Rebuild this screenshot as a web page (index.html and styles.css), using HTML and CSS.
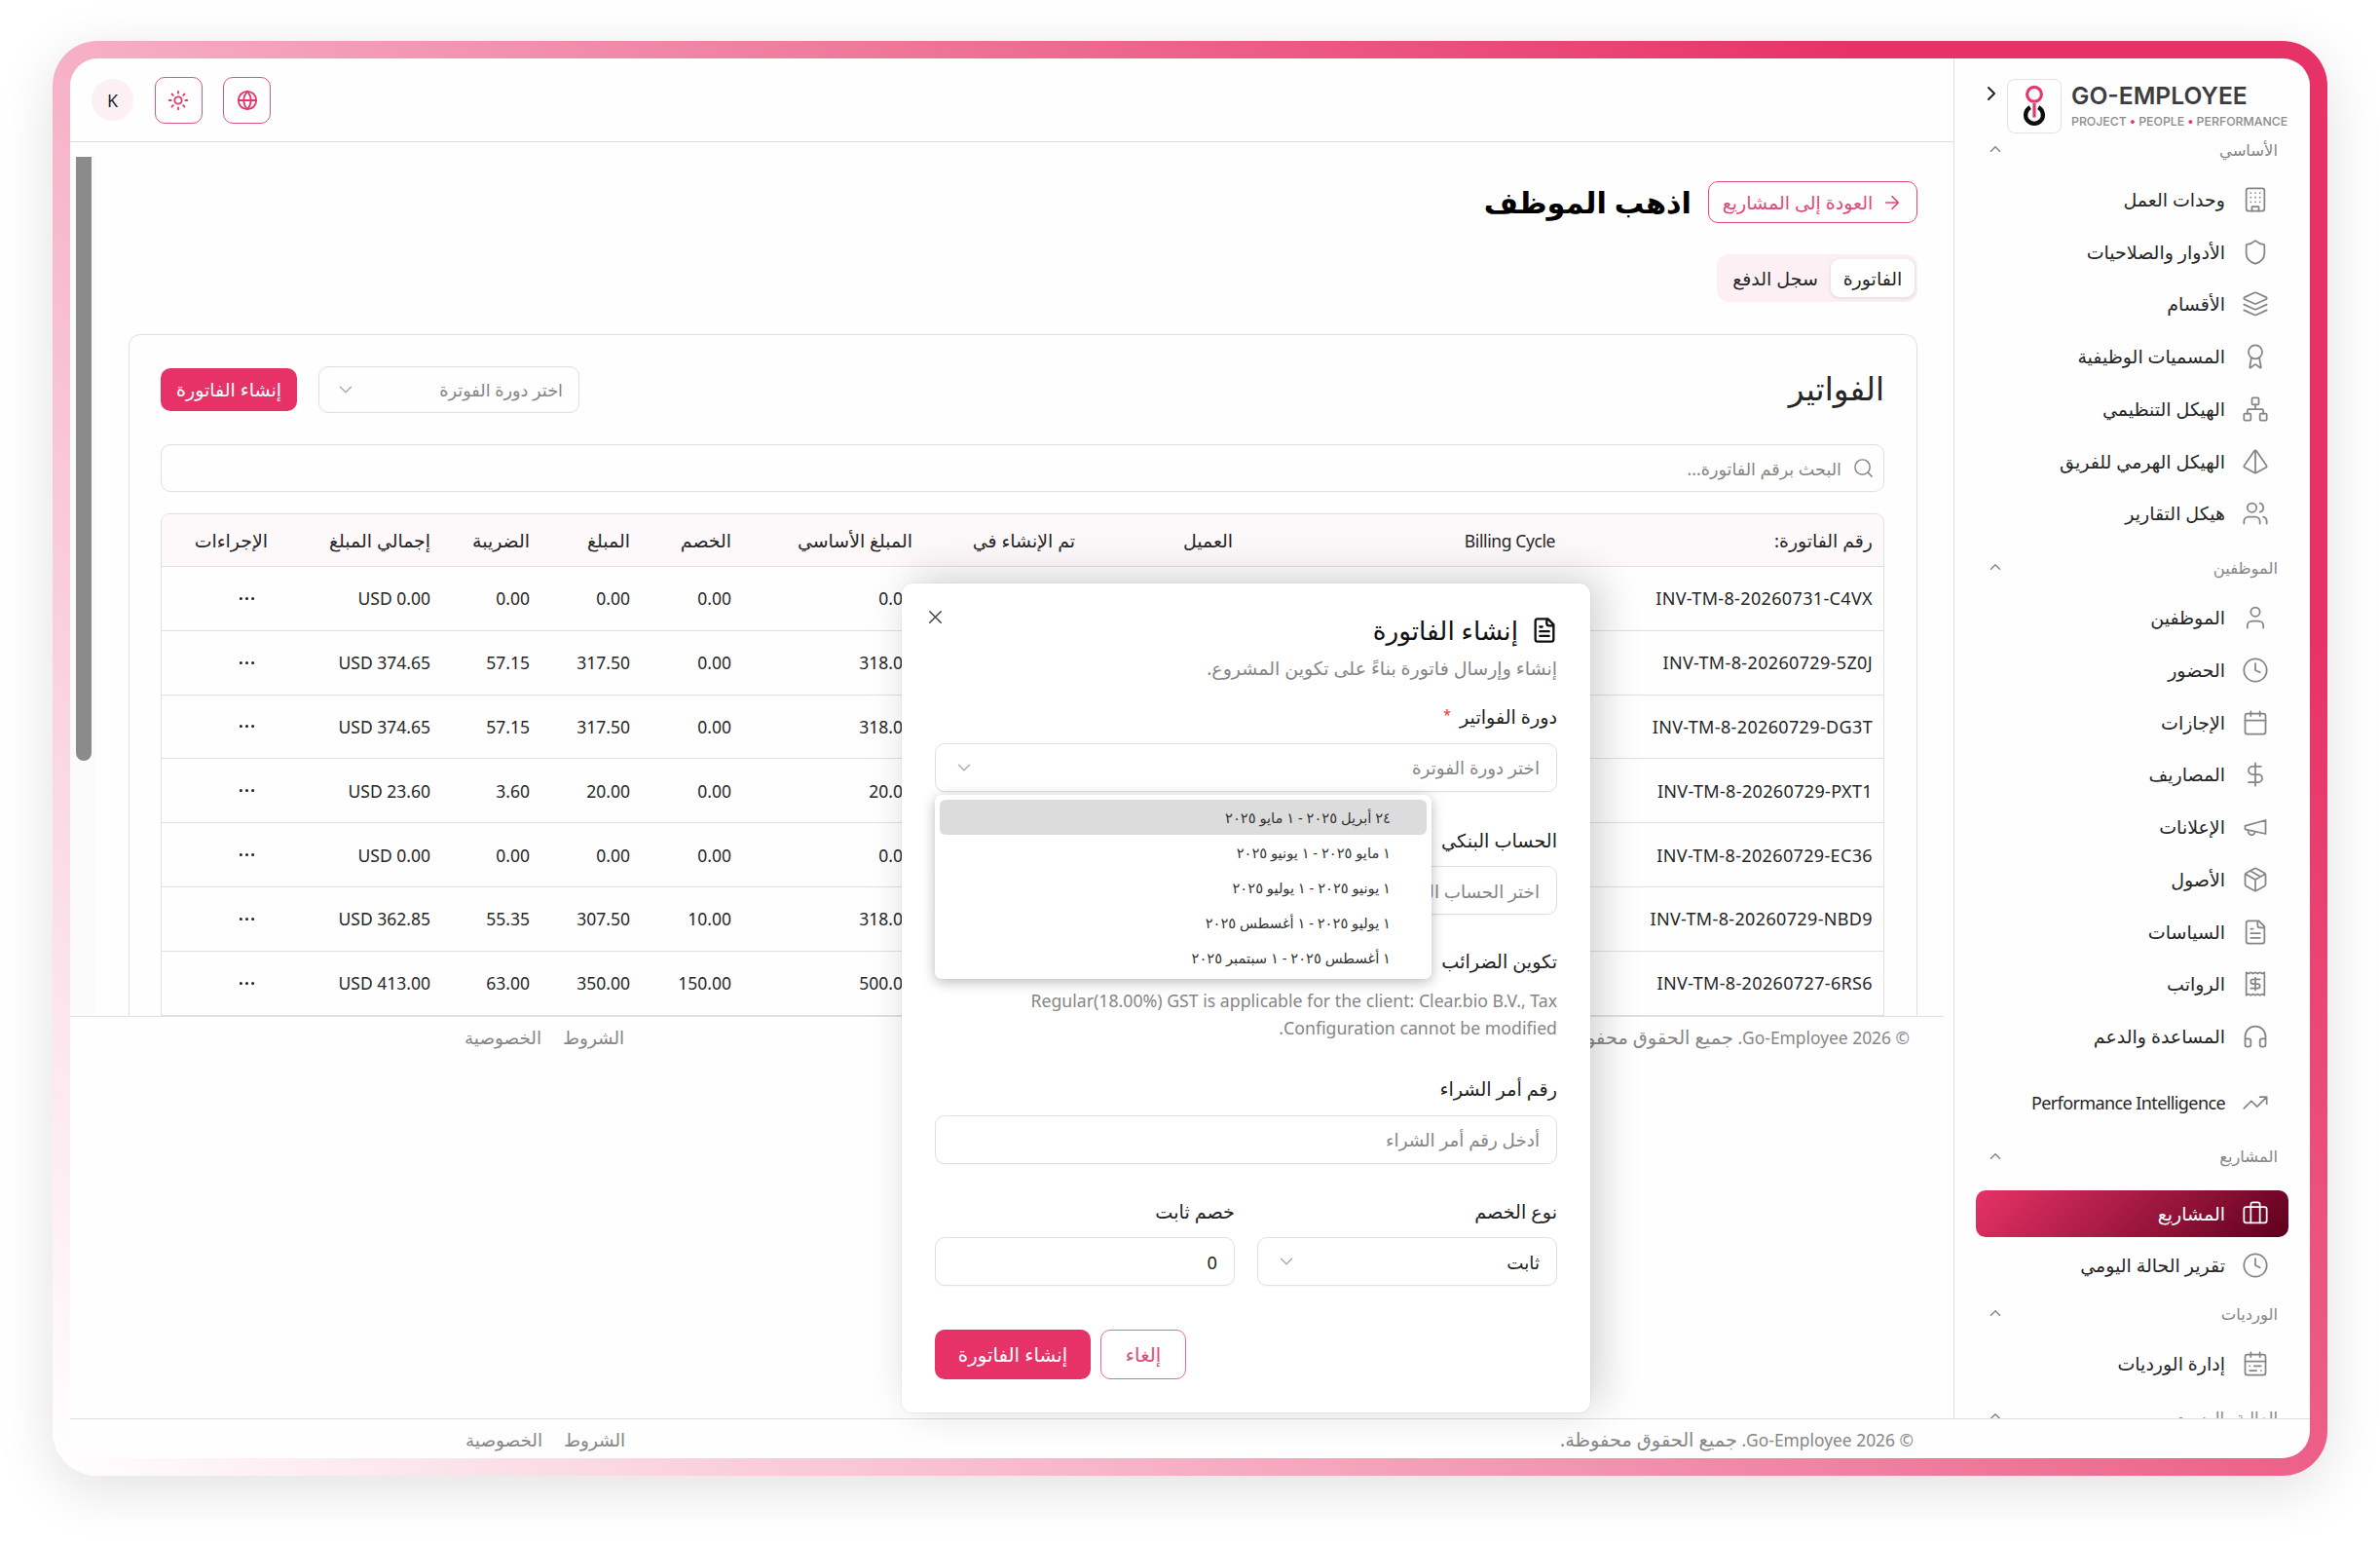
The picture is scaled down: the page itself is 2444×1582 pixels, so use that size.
FILE: index.html
```html
<!DOCTYPE html>
<html lang="ar" dir="rtl">
<head>
<meta charset="utf-8">
<title>Go-Employee</title>
<link rel="stylesheet" href="styles.css">
</head>
<body>
<svg class="sprite" aria-hidden="true">
  <symbol id="i-building" viewBox="0 0 24 24"><rect x="4" y="2" width="16" height="20" rx="2"/><path d="M9 22v-4h6v4M8 6h.01M16 6h.01M12 6h.01M12 10h.01M12 14h.01M16 10h.01M16 14h.01M8 10h.01M8 14h.01"/></symbol>
  <symbol id="i-shield" viewBox="0 0 24 24"><path d="M20 13c0 5-3.5 7.5-7.66 8.95a1 1 0 0 1-.67-.01C7.5 20.5 4 18 4 13V6a1 1 0 0 1 1-1c2 0 4.5-1.2 6.24-2.72a1.17 1.17 0 0 1 1.52 0C14.51 3.81 17 5 19 5a1 1 0 0 1 1 1z"/></symbol>
  <symbol id="i-layers" viewBox="0 0 24 24"><path d="m12.83 2.18a2 2 0 0 0-1.66 0L2.6 6.08a1 1 0 0 0 0 1.83l8.58 3.91a2 2 0 0 0 1.66 0l8.58-3.9a1 1 0 0 0 0-1.83Z"/><path d="m22 12.5-9.17 4.16a2 2 0 0 1-1.66 0L2 12.5"/><path d="m22 17.5-9.17 4.16a2 2 0 0 1-1.66 0L2 17.5"/></symbol>
  <symbol id="i-award" viewBox="0 0 24 24"><circle cx="12" cy="8" r="6"/><path d="m15.477 12.89 1.515 8.526a.5.5 0 0 1-.81.47l-3.58-2.687a1 1 0 0 0-1.197 0l-3.586 2.686a.5.5 0 0 1-.81-.469l1.514-8.526"/></symbol>
  <symbol id="i-network" viewBox="0 0 24 24"><rect x="16" y="16" width="6" height="6" rx="1"/><rect x="2" y="16" width="6" height="6" rx="1"/><rect x="9" y="2" width="6" height="6" rx="1"/><path d="M5 16v-3a1 1 0 0 1 1-1h12a1 1 0 0 1 1 1v3M12 12V8"/></symbol>
  <symbol id="i-pyramid" viewBox="0 0 24 24"><path d="M2.5 16.88a1 1 0 0 1-.32-1.43l9-13.02a1 1 0 0 1 1.64 0l9 13.01a1 1 0 0 1-.32 1.44l-8.51 4.86a2 2 0 0 1-1.98 0ZM12 2v20"/></symbol>
  <symbol id="i-users" viewBox="0 0 24 24"><path d="M16 21v-2a4 4 0 0 0-4-4H6a4 4 0 0 0-4 4v2"/><circle cx="9" cy="7" r="4"/><path d="M22 21v-2a4 4 0 0 0-3-3.87M16 3.13a4 4 0 0 1 0 7.75"/></symbol>
  <symbol id="i-user" viewBox="0 0 24 24"><path d="M19 21v-2a4 4 0 0 0-4-4H9a4 4 0 0 0-4 4v2"/><circle cx="12" cy="7" r="4"/></symbol>
  <symbol id="i-clock" viewBox="0 0 24 24"><circle cx="12" cy="12" r="10"/><path d="M12 6v6l4 2"/></symbol>
  <symbol id="i-calendar" viewBox="0 0 24 24"><rect x="3" y="4" width="18" height="18" rx="2"/><path d="M8 2v4M16 2v4M3 10h18"/></symbol>
  <symbol id="i-dollar" viewBox="0 0 24 24"><path d="M12 2v20M17 5H9.5a3.5 3.5 0 0 0 0 7h5a3.5 3.5 0 0 1 0 7H6"/></symbol>
  <symbol id="i-megaphone" viewBox="0 0 24 24"><path d="m3 11 18-5v12L3 14v-3zM11.6 16.8a3 3 0 1 1-5.8-1.6"/></symbol>
  <symbol id="i-package" viewBox="0 0 24 24"><path d="M11 21.73a2 2 0 0 0 2 0l7-4A2 2 0 0 0 21 16V8a2 2 0 0 0-1-1.73l-7-4a2 2 0 0 0-2 0l-7 4A2 2 0 0 0 3 8v8a2 2 0 0 0 1 1.73zM12 22V12M3.3 7l8.7 5 8.7-5M7.5 4.27l9 5.15"/></symbol>
  <symbol id="i-file" viewBox="0 0 24 24"><path d="M15 2H6a2 2 0 0 0-2 2v16a2 2 0 0 0 2 2h12a2 2 0 0 0 2-2V7ZM14 2v4a2 2 0 0 0 2 2h4M10 9H8M16 13H8M16 17H8"/></symbol>
  <symbol id="i-receipt" viewBox="0 0 24 24"><path d="M4 2v20l2-1 2 1 2-1 2 1 2-1 2 1 2-1 2 1V2l-2 1-2-1-2 1-2-1-2 1-2-1-2 1ZM16 8h-6a2 2 0 1 0 0 4h4a2 2 0 1 1 0 4H8M12 17.5v-11"/></symbol>
  <symbol id="i-headphones" viewBox="0 0 24 24"><path d="M3 14h3a2 2 0 0 1 2 2v3a2 2 0 0 1-2 2H5a2 2 0 0 1-2-2v-7a9 9 0 0 1 18 0v7a2 2 0 0 1-2 2h-1a2 2 0 0 1-2-2v-3a2 2 0 0 1 2-2h3"/></symbol>
  <symbol id="i-trend" viewBox="0 0 24 24"><path d="m22 7-8.5 8.5-5-5L2 17M16 7h6v6"/></symbol>
  <symbol id="i-briefcase" viewBox="0 0 24 24"><path d="M16 20V4a2 2 0 0 0-2-2h-4a2 2 0 0 0-2 2v16"/><rect x="2" y="6" width="20" height="14" rx="2"/></symbol>
  <symbol id="i-range" viewBox="0 0 24 24"><rect x="3" y="4" width="18" height="18" rx="2"/><path d="M16 2v4M3 10h18M8 2v4M17 14h-6M13 18H7M7 14h.01M17 18h.01"/></symbol>
  <symbol id="i-up" viewBox="0 0 24 24"><path d="m18 15-6-6-6 6"/></symbol>
  <symbol id="i-down" viewBox="0 0 24 24"><path d="m6 9 6 6 6-6"/></symbol>
  <symbol id="i-right" viewBox="0 0 24 24"><path d="m9 18 6-6-6-6"/></symbol>
  <symbol id="i-arrow" viewBox="0 0 24 24"><path d="M5 12h14M12 5l7 7-7 7"/></symbol>
  <symbol id="i-search" viewBox="0 0 24 24"><circle cx="11" cy="11" r="8"/><path d="m21 21-4.3-4.3"/></symbol>
  <symbol id="i-globe" viewBox="0 0 24 24"><circle cx="12" cy="12" r="10"/><path d="M12 2a14.5 14.5 0 0 0 0 20 14.5 14.5 0 0 0 0-20M2 12h20"/></symbol>
  <symbol id="i-sun" viewBox="0 0 24 24"><circle cx="12" cy="12" r="4"/><path d="M12 2v2M12 20v2M4.93 4.93l1.41 1.41M17.66 17.66l1.41 1.41M2 12h2M20 12h2M6.34 17.66l-1.41 1.41M19.07 4.93l-1.41 1.41"/></symbol>
  <symbol id="i-x" viewBox="0 0 24 24"><path d="M18 6 6 18M6 6l12 12"/></symbol>
  <symbol id="i-dots" viewBox="0 0 24 24"><circle cx="12" cy="12" r="1"/><circle cx="19" cy="12" r="1"/><circle cx="5" cy="12" r="1"/></symbol>
</svg>

<div class="frame">
  <div class="app">
    <div class="shell">
      <aside class="sidebar">
        <div class="brand">
          <div class="brand-text" dir="ltr">
            <div class="brand-name">GO-EMPLOYEE</div>
            <div class="brand-tag">PROJECT <b>•</b> PEOPLE <b>•</b> PERFORMANCE</div>
          </div>
          <div class="brand-mark">
            <svg viewBox="0 0 56 56" width="56" height="56"><circle cx="28" cy="15.8" r="7.4" fill="none" stroke="#e13a6d" stroke-width="3.2"/><path d="M23.8 29.2a8.9 8.9 0 1 0 8.4 0" fill="none" stroke="#0c0c0c" stroke-width="4.3"/><path d="M28 25v14.5" stroke="#e13a6d" stroke-width="3.2"/></svg>
          </div>
          <svg class="icon collapse"><use href="#i-right"/></svg>
        </div>
        <nav class="nav">
          <div class="group first"><span>الأساسي</span><svg class="icon"><use href="#i-up"/></svg></div>
          <a class="item"><svg class="icon"><use href="#i-building"/></svg><span>وحدات العمل</span></a>
          <a class="item"><svg class="icon"><use href="#i-shield"/></svg><span>الأدوار والصلاحيات</span></a>
          <a class="item"><svg class="icon"><use href="#i-layers"/></svg><span>الأقسام</span></a>
          <a class="item"><svg class="icon"><use href="#i-award"/></svg><span>المسميات الوظيفية</span></a>
          <a class="item"><svg class="icon"><use href="#i-network"/></svg><span>الهيكل التنظيمي</span></a>
          <a class="item"><svg class="icon"><use href="#i-pyramid"/></svg><span>الهيكل الهرمي للفريق</span></a>
          <a class="item"><svg class="icon"><use href="#i-users"/></svg><span>هيكل التقارير</span></a>
          <div class="group"><span>الموظفين</span><svg class="icon"><use href="#i-up"/></svg></div>
          <a class="item"><svg class="icon"><use href="#i-user"/></svg><span>الموظفين</span></a>
          <a class="item"><svg class="icon"><use href="#i-clock"/></svg><span>الحضور</span></a>
          <a class="item"><svg class="icon"><use href="#i-calendar"/></svg><span>الإجازات</span></a>
          <a class="item"><svg class="icon"><use href="#i-dollar"/></svg><span>المصاريف</span></a>
          <a class="item"><svg class="icon"><use href="#i-megaphone"/></svg><span>الإعلانات</span></a>
          <a class="item"><svg class="icon"><use href="#i-package"/></svg><span>الأصول</span></a>
          <a class="item"><svg class="icon"><use href="#i-file"/></svg><span>السياسات</span></a>
          <a class="item"><svg class="icon"><use href="#i-receipt"/></svg><span>الرواتب</span></a>
          <a class="item"><svg class="icon"><use href="#i-headphones"/></svg><span>المساعدة والدعم</span></a>
          <a class="item spaced"><svg class="icon"><use href="#i-trend"/></svg><span>Performance Intelligence</span></a>
          <div class="group"><span>المشاريع</span><svg class="icon"><use href="#i-up"/></svg></div>
          <a class="item active"><svg class="icon"><use href="#i-briefcase"/></svg><span>المشاريع</span></a>
          <a class="item"><svg class="icon"><use href="#i-clock"/></svg><span>تقرير الحالة اليومي</span></a>
          <div class="group tight"><span>الورديات</span><svg class="icon"><use href="#i-up"/></svg></div>
          <a class="item"><svg class="icon"><use href="#i-range"/></svg><span>إدارة الورديات</span></a>
          <div class="group last"><span>المالية والرسوم</span><svg class="icon"><use href="#i-up"/></svg></div>
        </nav>
      </aside>

      <main class="main">
        <header class="topbar">
          <button class="square"><svg class="icon"><use href="#i-globe"/></svg></button>
          <button class="square"><svg class="icon"><use href="#i-sun"/></svg></button>
          <div class="avatar">K</div>
        </header>
        <section class="content">
          <div class="scrollbar"><div class="thumb"></div></div>
          <div class="title-row">
            <button class="back"><svg class="icon"><use href="#i-arrow"/></svg><span>العودة إلى المشاريع</span></button>
            <h1>اذهب الموظف</h1>
          </div>
          <div class="tabs"><span class="tab on">الفاتورة</span><span class="tab">سجل الدفع</span></div>
          <div class="card">
            <div class="card-head">
              <h2>الفواتير</h2>
              <div class="card-actions">
                <div class="select"><span>اختر دورة الفوترة</span><svg class="icon"><use href="#i-down"/></svg></div>
                <button class="primary">إنشاء الفاتورة</button>
              </div>
            </div>
            <div class="search"><svg class="icon"><use href="#i-search"/></svg><span>البحث برقم الفاتورة...</span></div>
            <div class="table">
              <div class="tr th"><span>رقم الفاتورة:</span><span class="latin">Billing Cycle</span><span>العميل</span><span>تم الإنشاء في</span><span>المبلغ الأساسي</span><span>الخصم</span><span>المبلغ</span><span>الضريبة</span><span>إجمالي المبلغ</span><span>الإجراءات</span></div>
              <div class="tr"><span>INV-TM-8-20260731-C4VX</span><span></span><span></span><span></span><span>0.00</span><span>0.00</span><span>0.00</span><span>0.00</span><span>USD 0.00</span><span><svg class="icon"><use href="#i-dots"/></svg></span></div>
              <div class="tr"><span>INV-TM-8-20260729-5Z0J</span><span></span><span></span><span></span><span>318.00</span><span>0.00</span><span>317.50</span><span>57.15</span><span>USD 374.65</span><span><svg class="icon"><use href="#i-dots"/></svg></span></div>
              <div class="tr"><span>INV-TM-8-20260729-DG3T</span><span></span><span></span><span></span><span>318.00</span><span>0.00</span><span>317.50</span><span>57.15</span><span>USD 374.65</span><span><svg class="icon"><use href="#i-dots"/></svg></span></div>
              <div class="tr"><span>INV-TM-8-20260729-PXT1</span><span></span><span></span><span></span><span>20.00</span><span>0.00</span><span>20.00</span><span>3.60</span><span>USD 23.60</span><span><svg class="icon"><use href="#i-dots"/></svg></span></div>
              <div class="tr"><span>INV-TM-8-20260729-EC36</span><span></span><span></span><span></span><span>0.00</span><span>0.00</span><span>0.00</span><span>0.00</span><span>USD 0.00</span><span><svg class="icon"><use href="#i-dots"/></svg></span></div>
              <div class="tr"><span>INV-TM-8-20260729-NBD9</span><span></span><span></span><span></span><span>318.00</span><span>10.00</span><span>307.50</span><span>55.35</span><span>USD 362.85</span><span><svg class="icon"><use href="#i-dots"/></svg></span></div>
              <div class="tr"><span>INV-TM-8-20260727-6RS6</span><span></span><span></span><span></span><span>500.00</span><span>150.00</span><span>350.00</span><span>63.00</span><span>USD 413.00</span><span><svg class="icon"><use href="#i-dots"/></svg></span></div>
            </div>
          </div>
        </section>
        <footer class="foot inner"><span>© 2026 Go-Employee. <em>جميع الحقوق محفوظة.</em></span><span class="links"><a>الشروط</a><a>الخصوصية</a></span></footer>
      </main>
    </div>
    <footer class="foot outer"><span>© 2026 Go-Employee. <em>جميع الحقوق محفوظة.</em></span><span class="links"><a>الشروط</a><a>الخصوصية</a></span></footer>
  </div>
</div>

<div class="modal">
  <svg class="icon close"><use href="#i-x"/></svg>
  <div class="modal-title"><svg class="icon"><use href="#i-file"/></svg><h3>إنشاء الفاتورة</h3></div>
  <p class="modal-sub">إنشاء وإرسال فاتورة بناءً على تكوين المشروع.</p>
  <label class="l1">دورة الفواتير <i>*</i></label>
  <div class="field select"><span>اختر دورة الفوترة</span><svg class="icon"><use href="#i-down"/></svg>
    <ul class="menu">
      <li class="hover">٢٤ أبريل ٢٠٢٥ - ١ مايو ٢٠٢٥</li>
      <li>١ مايو ٢٠٢٥ - ١ يونيو ٢٠٢٥</li>
      <li>١ يونيو ٢٠٢٥ - ١ يوليو ٢٠٢٥</li>
      <li>١ يوليو ٢٠٢٥ - ١ أغسطس ٢٠٢٥</li>
      <li>١ أغسطس ٢٠٢٥ - ١ سبتمبر ٢٠٢٥</li>
    </ul>
  </div>
  <label class="l2">الحساب البنكي</label>
  <div class="field select"><span>اختر الحساب البنكي</span></div>
  <label class="l3">تكوين الضرائب</label>
  <p class="note">Regular(18.00%) GST is applicable for the client: Clear.bio B.V., Tax Configuration cannot be modified.</p>
  <label class="l4">رقم أمر الشراء</label>
  <div class="field">أدخل رقم أمر الشراء</div>
  <div class="pair">
    <div><label>نوع الخصم</label><div class="field select dark"><span>ثابت</span><svg class="icon"><use href="#i-down"/></svg></div></div>
    <div><label>خصم ثابت</label><div class="field dark">0</div></div>
  </div>
  <div class="modal-actions"><button class="cancel">إلغاء</button><button class="primary">إنشاء الفاتورة</button></div>
</div>
</body>
</html>
```

FILE: styles.css
```css
* { box-sizing: border-box; margin: 0; padding: 0; }
:root { --pink: #e73267; --line: #e0e0e0; --text: #262626; --muted: #868686; }
body {
  width: 2444px; height: 1582px; overflow: hidden; background: #fff; color: var(--text);
  font-family: "Noto Sans", "DejaVu Sans", sans-serif; font-size: 18px;
  padding: 42px 54px 67px; position: relative;
}
button { font: inherit; background: none; border: 0; display: flex; align-items: center; justify-content: center; }
span, a, button, label { white-space: nowrap; }
.sprite { position: absolute; width: 0; height: 0; }
.icon { width: 28px; height: 28px; fill: none; stroke: currentColor; stroke-width: 1.5; stroke-linecap: round; stroke-linejoin: round; flex: none; }

.frame {
  width: 2336px; height: 1473px; padding: 18px; border-radius: 46px;
  background: linear-gradient(52deg, #fff 0, #e73267 86%);
  box-shadow: 0 14px 60px rgba(0, 0, 0, .12);
}
.app { height: 1437px; background: #fefefe; border-radius: 28px; overflow: hidden; display: flex; flex-direction: column; }
.shell { display: flex; height: 1396px; overflow: hidden; }

/* Sidebar */
.sidebar { width: 366px; border-inline-end: 1px solid var(--line); }
.brand { height: 78px; padding: 21px 23px 0 0; display: flex; align-items: flex-start; }
.brand-text { width: 222px; font-family: "Inter", sans-serif; color: #3d3d3f; }
.brand-name { font-size: 24.6px; font-weight: 600; line-height: 30px; margin-top: 2px; white-space: nowrap; }
.brand-tag { font-size: 12.3px; font-weight: 500; line-height: 20px; color: #8c8c8c; white-space: nowrap; margin-top: 2px; }
.brand-tag b { color: var(--pink); }
.brand-mark { width: 56px; height: 56px; border: 1px solid #e2e2e2; border-radius: 8px; margin-right: 10px; }
.brand-mark svg { display: block; margin: -1px; }
.collapse { width: 24px; height: 24px; margin: 3px 4px 0 0; color: #222; stroke-width: 2; }
.nav { display: flex; flex-direction: column; }
.group { height: 48px; padding: 0 33px; display: flex; align-items: center; justify-content: space-between; color: var(--muted); font-size: 16.4px; margin-top: 4px; margin-bottom: 1px; flex: none; }
.group .icon { width: 18px; height: 18px; stroke-width: 2; }
.group.first { height: 30px; margin: 0 0 10px; }
.group.tight { height: 34px; margin: 5px 0 8px; }
.group.last { height: 34px; margin-top: 10px; }
.item { height: 47.75px; margin: 3px 22px; padding-right: 20px; display: flex; align-items: center; gap: 17px; font-size: 19px; flex: none; }
.item .icon { color: #858585; }
.item.spaced { margin-top: 17px; font-size: 18px; letter-spacing: -.6px; }
.item.active { margin-top: 10px; color: #fff; font-weight: 500; border-radius: 10px; background: linear-gradient(135deg, #e73267, #5e001c); }
.item.active .icon { color: #fff; }

/* Main column */
.main { flex: 1; display: flex; flex-direction: column; }
.topbar { height: 86px; border-bottom: 1px solid #dcdcdc; padding-left: 22px; display: flex; align-items: center; justify-content: flex-end; }
.square { width: 49px; height: 48px; border: 1.5px solid #dd5680; border-radius: 10px; margin-left: 21.5px; color: #df3a6c; }
.square .icon { width: 22px; height: 22px; stroke-width: 2; }
.avatar { width: 43px; height: 43px; border-radius: 50%; background: #fdf0f4; display: flex; align-items: center; justify-content: center; font-size: 18px; }
.content { height: 897px; overflow: hidden; padding: 40px 37px 0 60px; position: relative; }
.scrollbar { position: absolute; left: 0; top: 15px; bottom: 0; width: 27px; background: #fbfbfb; }
.thumb { width: 16px; height: 620px; background: #8b8b8b; border-radius: 0 0 8px 8px; position: absolute; left: 6px; }
.title-row { display: flex; align-items: center; gap: 17px; height: 43px; }
.back { width: 215px; height: 43px; border: 1.5px solid #e04a7a; border-radius: 10px; color: #e04a7a; gap: 9px; font-size: 19px; }
.back .icon { width: 22px; height: 22px; stroke-width: 1.8; }
h1 { font-size: 30.4px; line-height: 43px; color: #000; font-weight: 700; white-space: nowrap; }
.tabs { width: 206px; height: 49px; margin-top: 32px; background: #fdf0f4; border-radius: 12px; padding: 5px 3px; display: flex; font-size: 19px; }
.tab { flex: 1; display: flex; align-items: center; justify-content: center; }
.tab.on { flex: none; width: 86px; background: #fff; border-radius: 9px; box-shadow: 0 1px 4px rgba(0, 0, 0, .12); }
.card { margin-top: 33px; height: 800px; border: 1.5px solid var(--line); border-radius: 12px; padding: 32px 33px 0 32px; }
.card-head { height: 48px; display: flex; align-items: center; justify-content: space-between; }
h2 { font-size: 32.6px; font-weight: 400; line-height: 46px; height: 48px; white-space: nowrap; }
.card-actions { display: flex; align-items: center; gap: 22px; }
.select { display: flex; align-items: center; justify-content: space-between; color: var(--muted); }
.select .icon { width: 22px; height: 22px; color: #aaa; }
.card .select { width: 268px; height: 48px; border: 1.5px solid var(--line); border-radius: 10px; padding: 0 16px; font-size: 17.7px; }
.primary { background: var(--pink); color: #fff; border-radius: 10px; }
.card .primary { width: 140px; height: 44px; font-size: 19px; }
.search { margin-top: 32px; height: 49px; border: 1.5px solid var(--line); border-radius: 10px; padding-right: 9px; display: flex; align-items: center; gap: 11px; color: var(--muted); font-size: 17.6px; }
.search .icon { width: 23px; height: 23px; }
.table { margin-top: 22px; border: 1.5px solid var(--line); border-radius: 9px 9px 0 0; }
.tr { display: grid; grid-template-columns: 326px 331px 162px 167px 186px 104px 103px 102px 167px 120px; height: 65.8px; border-bottom: 1.5px solid var(--line); align-items: center; font-size: 17.5px; }
.tr > span { padding-right: 11px; }
.tr:not(.th) > span { direction: ltr; text-align: right; }
.tr:not(.th) > span:first-child { font-size: 18px; letter-spacing: .35px; }
.tr .icon { width: 21px; height: 21px; margin-right: 11px; fill: currentColor; display: block; margin-left: auto; }
.th { height: 54px; background: #fdf8fa; border-radius: 9px 9px 0 0; font-size: 18.9px; }
.th .latin { font-size: 17.5px; letter-spacing: -.4px; }

.foot { display: flex; justify-content: space-between; align-items: center; color: var(--muted); font-size: 17.4px; border-top: 1.5px solid var(--line); }
.foot em { font-style: normal; font-size: 19.4px; }
.foot.inner { margin-right: 10px; height: 42px; padding: 0 35px 0 405px; }
.foot.outer { height: 41px; padding: 0 407px 0 406px; }
.links { display: flex; gap: 22px; font-size: 18.4px; }

/* Invoice dialog */
.modal { position: absolute; left: 926px; top: 599px; width: 707px; height: 851px; background: #fff; border-radius: 11px; box-shadow: 10px -6px 44px rgba(0, 0, 0, .18), 0 0 2px rgba(0, 0, 0, .12); padding: 31px 34px 0; display: flex; flex-direction: column; }
.close { position: absolute; left: 23px; top: 23px; width: 23px; height: 23px; color: #444; }
.modal-title { display: flex; align-items: center; gap: 13px; height: 34px; color: #111; }
.modal-title .icon { stroke-width: 2; margin-right: -1px; }
h3 { font-size: 26.3px; line-height: 32px; font-weight: 500; white-space: nowrap; }
.modal-sub { font-size: 19px; color: var(--muted); line-height: 30px; margin-top: 7px; white-space: nowrap; }
label { display: block; height: 30px; line-height: 30px; font-size: 19.2px; font-weight: 500; color: #222; }
label i { color: #f04040; font-style: normal; font-size: 14px; margin-right: 4px; vertical-align: 4px; line-height: 1; }
.l1 { margin-top: 20px; }
.l2 { margin-top: 35px; }
.l3 { margin-top: 33px; }
.l4 { margin-top: 34px; }
.field { height: 50px; margin-top: 11.5px; border: 1.5px solid var(--line); border-radius: 10px; padding: 0 17px 0 18px; display: flex; align-items: center; color: var(--muted); font-size: 18.3px; position: relative; flex: none; box-shadow: 0 1px 2px rgba(0, 0, 0, .04); }
.field.dark { color: #222; }
.note { font-size: 17.7px; line-height: 28px; color: var(--muted); margin-top: 11px; width: 560px; }
.pair { display: grid; grid-template-columns: 308px 308px; gap: 23px; margin-top: 34px; }
.modal-actions { display: flex; justify-content: flex-end; gap: 10px; margin-top: 45px; }
.modal-actions button { height: 51px; font-size: 19.8px; }
.modal-actions .primary { width: 160px; }
.modal-actions .cancel { width: 88px; border: 1.5px solid #e56a91; border-radius: 10px; color: #e04a7a; }
.menu { position: absolute; left: -1px; top: 52px; width: 510px; height: 189px; z-index: 2; list-style: none; background: #fff; border-radius: 7px; box-shadow: 0 3px 14px rgba(0, 0, 0, .28); padding: 5px; color: #333; font-size: 14.7px; }
.menu li { height: 36px; line-height: 36px; padding-right: 37px; border-radius: 6px; white-space: nowrap; }
.menu .hover { background: #dcdcdc; }
```
